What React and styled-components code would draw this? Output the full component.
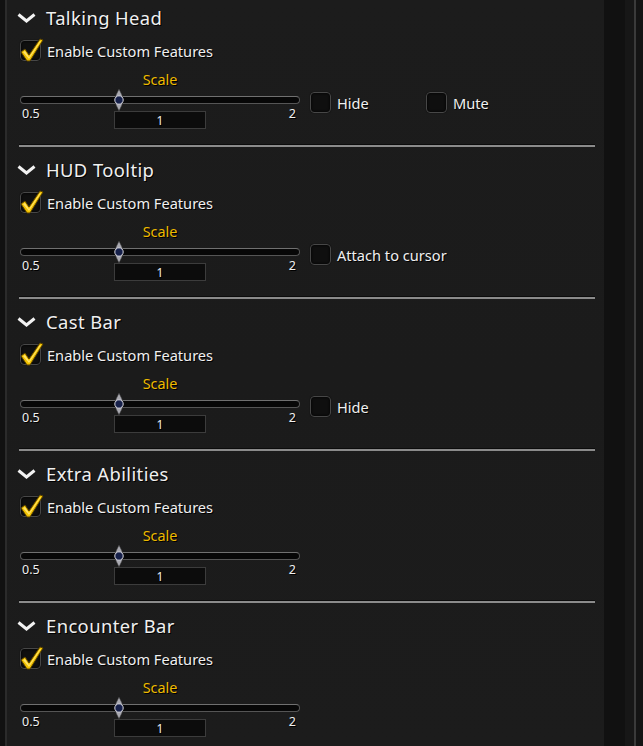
import styled, { createGlobalStyle } from "styled-components";

const GlobalStyle = createGlobalStyle`
  html, body {
    margin: 0;
    padding: 0;
    background: #161616;
    font-family: "Noto Sans", "Open Sans", sans-serif;
    color: #f0f0f0;
  }
`;

const Frame = styled.div`
  display: flex;
  width: 643px;
  height: 746px;
  overflow: hidden;
  background: #141414;
`;

const LeftEdge = styled.div`
  width: 5px;
  background: #111;
  border-right: 2px solid #2b2b2b;
`;

const Panel = styled.div`
  width: 597px;
  background: linear-gradient(180deg, #1c1c1c 0%, #1b1b1b 50%, #1c1c1c 100%);
`;

const ScrollGutter = styled.div`
  width: 21px;
  background: #111111;
`;

const ScrollRail = styled.div`
  width: 9px;
  background: #171717;
  border-right: 2px solid #3a3a3a;
`;

const Section = styled.div`
  padding-top: 5px;
`;

const Header = styled.div`
  display: flex;
  align-items: center;
  height: 24px;
  padding-left: 10px;
  font-size: 18.4px;
  letter-spacing: 0.4px;
  text-shadow: 1px 1px 0 #000;
  svg {
    margin-right: 10px;
    margin-top: 1px;
  }
`;

const CheckRow = styled.label`
  display: flex;
  align-items: center;
  gap: 6px;
  margin-top: 11px;
  padding-left: 13px;
  font-size: 14.6px;
  text-shadow: 1px 1px 0 #000;
`;

const Box = styled.span`
  position: relative;
  flex: none;
  width: 19px;
  height: 19px;
  background: #0f0f0f;
  border: 1px solid #474747;
  border-radius: 4px;
  box-shadow: inset 0 0 3px #000, 0 0 1px #000;
`;

const Tick = styled.svg`
  position: absolute;
  left: -2px;
  top: -5px;
`;

const Controls = styled.div`
  display: flex;
  align-items: flex-start;
  margin-top: 10px;
  padding-left: 13px;
`;

const SliderBlock = styled.div`
  width: 280px;
  display: flex;
  flex-direction: column;
`;

const ScaleLabel = styled.div`
  text-align: center;
  font-size: 14.4px;
  line-height: 18px;
  color: #eebb00;
  text-shadow: 1px 1px 0 #000;
`;

const SliderArea = styled.div`
  position: relative;
  height: 19px;
  margin-top: 1px;
  display: flex;
  align-items: center;
`;

const Track = styled.div`
  width: 100%;
  height: 6px;
  background: #070707;
  border: 1px solid #555;
  border-top-color: #707070;
  border-radius: 4px;
`;

const Thumb = styled.svg`
  position: absolute;
  top: -1px;
  margin-left: -7px;
`;

const Limits = styled.div`
  display: grid;
  grid-template-columns: 1fr 92px 1fr;
  align-items: start;
  font-size: 12.5px;
  line-height: 8px;
  text-shadow: 1px 1px 0 #000;
`;

const Limit = styled.span`
  padding: ${(p) => (p.$end ? "0 4px 0 0" : "0 0 0 2px")};
  margin-top: 1px;
  text-align: ${(p) => (p.$end ? "right" : "left")};
`;

const ValueBox = styled.div`
  margin-top: 2px;
  height: 16px;
  background: #0c0c0c;
  border: 1px solid #3c3c3c;
  text-align: center;
  font-size: 12px;
  line-height: 17px;
`;

const Options = styled.div`
  display: flex;
  margin-top: 21px;
  margin-left: 10px;
`;

const Option = styled.label`
  display: flex;
  align-items: center;
  gap: 6px;
  min-width: 116px;
  font-size: 14.6px;
  text-shadow: 1px 1px 0 #000;
`;

const Separator = styled.div`
  height: 2px;
  margin: 16px 9px 5px 12px;
  background: #8b8b8b;
  box-shadow: 0 -1px 0 #0c0c0c;
`;

const Chevron = () => (
  <svg width="19" height="10" viewBox="0 0 19 10">
    <polyline points="1.5,1.5 9.5,8 17.5,1.5" fill="none" stroke="#f2f2f2" strokeWidth="3" />
  </svg>
);

const CheckMark = () => (
  <Tick width="25" height="27" viewBox="0 0 25 27">
    <path d="M2 16 L6 13 L10 19 L21 3 L24 4 L11 25 L8 25 Z" fill="#f2c200" stroke="#5a4300" strokeWidth="1" />
    <path d="M4 16 L6 15 L10 21 L21 5 L22 5 L10 23 Z" fill="#ffe36a" />
  </Tick>
);

const SliderThumb = ({ left }) => (
  <Thumb width="14" height="22" viewBox="0 0 14 22" style={{ left }}>
    <path d="M7 0 L10 6 L11 11 L10 16 L7 22 L4 16 L3 11 L4 6 Z" fill="#a9a9b0" stroke="#333" strokeWidth="0.6" />
    <circle cx="7" cy="11" r="4.2" fill="#16204a" stroke="#d6d6de" strokeWidth="1" />
  </Thumb>
);

function Check({ checked, label, as: Row = Option }) {
  return (
    <Row>
      <Box>{checked && <CheckMark />}</Box>
      {label}
    </Row>
  );
}

const sections = [
  { title: "Talking Head", options: ["Hide", "Mute"] },
  { title: "HUD Tooltip", options: ["Attach to cursor"] },
  { title: "Cast Bar", options: ["Hide"] },
  { title: "Extra Abilities", options: [] },
  { title: "Encounter Bar", options: [] },
];

const min = 0.5;
const max = 2;
const value = 1;

export default function App() {
  const ratio = (value - min) / (max - min);
  return (
    <>
      <GlobalStyle />
      <Frame>
        <LeftEdge />
        <Panel>
          {sections.map((s) => (
            <Section key={s.title}>
              <Header>
                <Chevron />
                {s.title}
              </Header>
              <Check as={CheckRow} checked label="Enable Custom Features" />
              <Controls>
                <SliderBlock>
                  <ScaleLabel>Scale</ScaleLabel>
                  <SliderArea>
                    <Track />
                    <SliderThumb left={8 + 272 * ratio} />
                  </SliderArea>
                  <Limits>
                    <Limit>{min}</Limit>
                    <ValueBox>{value}</ValueBox>
                    <Limit $end>{max}</Limit>
                  </Limits>
                </SliderBlock>
                {s.options.length > 0 && (
                  <Options>
                    {s.options.map((o) => (
                      <Check key={o} label={o} />
                    ))}
                  </Options>
                )}
              </Controls>
              <Separator />
            </Section>
          ))}
        </Panel>
        <ScrollGutter />
        <ScrollRail />
      </Frame>
    </>
  );
}
